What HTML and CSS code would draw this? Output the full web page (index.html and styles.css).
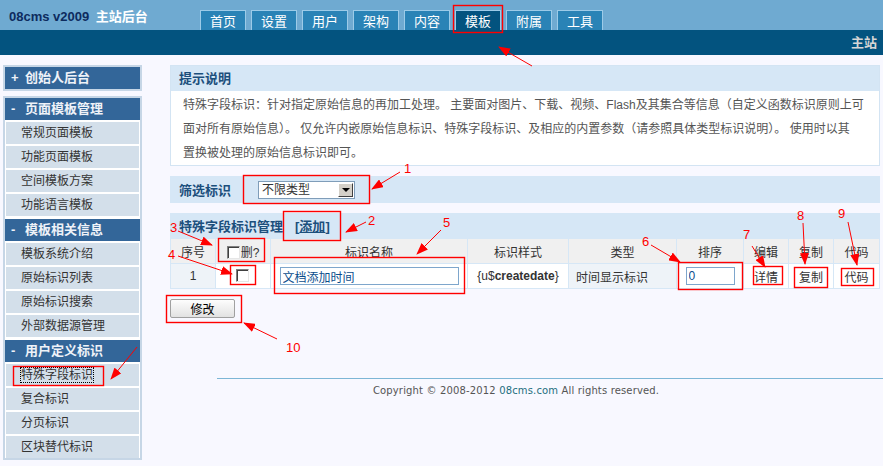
FILE: index.html
```html
<!DOCTYPE html>
<html lang="zh-cn">
<head>
  <meta charset="UTF-8" />
  <title>08cms v2009 主站后台</title>
  <link rel="stylesheet" href="styles.css">
</head>
<body>

  <div class="topbar">
    <div class="logo">08cms v2009 <span>主站后台</span></div>
    <div class="tabs">
      <a class="tab">首页</a>
      <a class="tab">设置</a>
      <a class="tab">用户</a>
      <a class="tab">架构</a>
      <a class="tab">内容</a>
      <a class="tab on">模板</a>
      <a class="tab">附属</a>
      <a class="tab">工具</a>
    </div>
  </div>
  <div class="subbar">主站</div>

  <div class="layout">
    <div class="sidebar">
      <div class="menu">
        <h3><i>+</i>创始人后台</h3>
      </div>
      <div class="menu">
        <h3><i>-</i>页面模板管理</h3>
        <ul>
          <li>常规页面模板</li>
          <li>功能页面模板</li>
          <li>空间模板方案</li>
          <li>功能语言模板</li>
        </ul>
        <h3><i>-</i>模板相关信息</h3>
        <ul>
          <li>模板系统介绍</li>
          <li>原始标识列表</li>
          <li>原始标识搜索</li>
          <li>外部数据源管理</li>
        </ul>
        <h3><i>-</i>用户定义标识</h3>
        <ul>
          <li><span class="current">特殊字段标识</span></li>
          <li>复合标识</li>
          <li>分页标识</li>
          <li>区块替代标识</li>
        </ul>
      </div>
    </div>

    <div class="main">
      <div class="tip">
        <h4>提示说明</h4>
        <p>特殊字段标识：针对指定原始信息的再加工处理。 主要面对图片、下载、视频、Flash及其集合等信息（自定义函数标识原则上可<br>面对所有原始信息）。 仅允许内嵌原始信息标识、特殊字段标识、及相应的内置参数（请参照具体类型标识说明）。 使用时以其<br>置换被处理的原始信息标识即可。</p>
      </div>

      <div class="filter">
        <b>筛选标识</b>
        <div class="select">
          <span class="select-text">不限类型</span>
          <span class="select-btn"></span>
        </div>
      </div>

      <div class="list-head">
        <b>特殊字段标识管理</b>
        <b class="add">[<a>添加</a>]</b>
      </div>

      <table class="grid">
        <colgroup>
          <col style="width:45px"><col style="width:55px"><col style="width:197px">
          <col style="width:101px"><col style="width:108px"><col style="width:67px">
          <col style="width:45px"><col style="width:45px"><col style="width:46px">
        </colgroup>
        <tr>
          <th>序号</th>
          <th><input type="checkbox" class="chk">删?</th>
          <th>标识名称</th>
          <th>标识样式</th>
          <th>类型</th>
          <th>排序</th>
          <th>编辑</th>
          <th>复制</th>
          <th>代码</th>
        </tr>
        <tr>
          <td class="alt">1</td>
          <td><input type="checkbox" class="chk"></td>
          <td><input type="text" class="txt name" value="文档添加时间"></td>
          <td class="tag">{u$<b>createdate</b>}</td>
          <td class="alt left">时间显示标识</td>
          <td><input type="text" class="txt order" value="0"></td>
          <td><a>详情</a></td>
          <td><a>复制</a></td>
          <td><a>代码</a></td>
        </tr>
      </table>

      <button class="btn">修改</button>

      <div class="footer">Copyright © 2008-2012 <a>08cms.com</a> All rights reserved.</div>
    </div>
  </div>

  <!-- 说明标注：红框、箭头和编号 -->
  <svg class="notes" width="883" height="466" viewBox="0 0 883 466">
    <defs>
      <marker id="head" markerWidth="12" markerHeight="9" refX="11" refY="4.5" orient="auto" markerUnits="userSpaceOnUse">
        <path d="M0,0 L12,4.5 L0,9 z" fill="#f00"/>
      </marker>
    </defs>
    <g fill="none" stroke="#f00" stroke-width="1.4">
      <rect x="453.5" y="5.5" width="49" height="27"/>
      <rect x="13.5" y="366.5" width="90" height="19"/>
      <rect x="243.5" y="175.5" width="126" height="28"/>
      <rect x="283.5" y="211.5" width="57" height="29"/>
      <rect x="218.5" y="238.5" width="46" height="23"/>
      <rect x="230.5" y="265.5" width="25" height="19"/>
      <rect x="274.5" y="257.5" width="190" height="36"/>
      <rect x="678.5" y="262.5" width="64" height="27"/>
      <rect x="753.5" y="266.5" width="29" height="18"/>
      <rect x="794.5" y="267.5" width="33" height="20"/>
      <rect x="841.5" y="268.5" width="32" height="17"/>
      <rect x="166.5" y="295.5" width="75" height="27"/>
    </g>
    <g stroke="#f00" stroke-width="1" marker-end="url(#head)">
      <line x1="532" y1="66" x2="499" y2="47"/>
      <line x1="137" y1="347" x2="111" y2="379"/>
      <line x1="400" y1="172" x2="372" y2="189"/>
      <line x1="366" y1="222" x2="346" y2="232"/>
      <line x1="178" y1="231" x2="212" y2="245"/>
      <line x1="178" y1="256" x2="232" y2="274"/>
      <line x1="441" y1="230" x2="417" y2="254"/>
      <line x1="651" y1="245" x2="680" y2="262"/>
      <line x1="752" y1="246" x2="765" y2="267"/>
      <line x1="803" y1="223" x2="805" y2="264"/>
      <line x1="848" y1="222" x2="857" y2="265"/>
      <line x1="277" y1="339" x2="244" y2="323"/>
    </g>
    <g class="num" fill="#f00">
      <text x="404" y="173">1</text>
      <text x="368" y="225">2</text>
      <text x="170" y="232">3</text>
      <text x="168" y="259">4</text>
      <text x="443" y="227">5</text>
      <text x="642" y="246">6</text>
      <text x="743" y="239">7</text>
      <text x="797" y="220">8</text>
      <text x="838" y="218">9</text>
      <text x="286" y="352">10</text>
    </g>
  </svg>

</body>
</html>
```

FILE: styles.css
```css
body {
  margin: 0;
  background-color: #f8f8ff;
  font-family: "Liberation Sans", "Noto Sans CJK SC", sans-serif;
  font-size: 12px;
  color: #333;
  position: relative;
}

a {
  cursor: pointer;
}

/* 顶部 */
.topbar {
  height: 30px;
  background-color: #6faad1;
  display: flex;
  align-items: flex-end;
}

.logo {
  width: 191px;
  padding-left: 9px;
  align-self: center;
  font-size: 13px;
  font-weight: bold;
  color: #0d2b5e;
  white-space: nowrap;
}

.logo span {
  color: #fff;
  margin-left: 3px;
}

.tabs {
  display: flex;
  gap: 5px;
}

.tab {
  width: 46px;
  height: 20px;
  box-sizing: border-box;
  border: 1px solid #9ccbe8;
  border-bottom: none;
  background-color: #2a83b6;
  color: #fff;
  font-size: 13px;
  line-height: 16px;
  padding-top: 3px;
  text-align: center;
}

.tab.on {
  background-color: #03537f;
}

.subbar {
  height: 25px;
  line-height: 25px;
  background-color: #03537f;
  color: #d6d6d6;
  font-size: 13px;
  font-weight: bold;
  text-align: right;
  padding-right: 6px;
}

/* 左侧菜单 */
.layout {
  display: flex;
  align-items: flex-start;
}

.sidebar {
  width: 140px;
  margin: 10px 0 0 3px;
}

.menu {
  border: 2px solid #c6d6e6;
  background-color: #fff;
  margin-bottom: 5px;
}

.menu h3 {
  margin: 0;
  height: 22px;
  line-height: 22px;
  background-color: #336699;
  color: #eef2f8;
  font-size: 13px;
  padding-left: 6px;
}

.menu h3 i {
  display: inline-block;
  width: 14px;
  font-style: normal;
}

.menu ul {
  list-style: none;
  margin: 0;
  padding: 0;
}

.menu ul + h3 {
  margin-top: 3px;
}

.menu li {
  height: 22px;
  line-height: 22px;
  margin: 2px 1px 0;
  padding-left: 15px;
  background-color: #d3dfea;
  font-size: 12px;
  color: #333;
}

.current {
  outline: 1px dotted #000;
}

/* 右侧内容 */
.main {
  flex: 1;
  margin: 10px 3px 0 28px;
}

.tip {
  border: 1px solid #d3e4f3;
  background-color: #fff;
}

.tip h4 {
  margin: 0;
  height: 25px;
  line-height: 25px;
  background-color: #d6e7f6;
  color: #1c4f7c;
  font-size: 13px;
  padding-left: 8px;
}

.tip p {
  margin: 0;
  padding: 2px 8px 0 12px;
  line-height: 24px;
  color: #555;
  white-space: nowrap;
}

.filter {
  margin-top: 10px;
  height: 27px;
  background-color: #d6e7f6;
  display: flex;
  align-items: center;
  padding-left: 9px;
}

.filter b {
  width: 79px;
  color: #1c4f7c;
  font-size: 13px;
}

.select {
  width: 97px;
  height: 18px;
  box-sizing: border-box;
  border: 1px solid #7f9db9;
  background-color: #fff;
  display: flex;
  justify-content: space-between;
  padding: 0 1px 0 3px;
  align-items: center;
}

.select-text {
  line-height: 16px;
}

.select-btn {
  width: 15px;
  height: 14px;
  box-sizing: border-box;
  background-color: #d4d0c8;
  border: 1px solid;
  border-color: #fff #404040 #404040 #fff;
  display: flex;
  align-items: center;
  justify-content: center;
}

.select-btn::after {
  content: "";
  border-left: 4px solid transparent;
  border-right: 4px solid transparent;
  border-top: 4px solid #000;
}

.list-head {
  margin-top: 10px;
  height: 25px;
  background-color: #d6e7f6;
  display: flex;
  align-items: center;
  padding-left: 9px;
  color: #1c4f7c;
  font-size: 13px;
}

.list-head .add {
  margin-left: 12px;
}

.add a {
  text-decoration: underline;
}

.grid {
  width: 100%;
  table-layout: fixed;
  border-collapse: collapse;
}

.grid th,
.grid td {
  height: 24px;
  padding: 0;
  border: 1px solid #d6e7f6;
  text-align: center;
  font-weight: normal;
  background-color: #fff;
}

.grid th {
  background-color: #f0f0f0;
}

.grid td.alt {
  background-color: #eef3f8;
}

.grid td.left {
  text-align: left;
  padding-left: 7px;
}

.grid .tag {
  font-size: 12px;
}

.chk {
  -webkit-appearance: none;
  appearance: none;
  width: 13px;
  height: 13px;
  margin: 0 1px 0 0;
  box-sizing: border-box;
  border: 1px solid;
  border-color: #808080 #e6e6e6 #e6e6e6 #808080;
  box-shadow: inset 1px 1px 0 #404040;
  background-color: #fff;
  vertical-align: -2px;
}

.txt {
  height: 18px;
  box-sizing: border-box;
  border: 1px solid #7ea6cc;
  padding: 0 2px;
  color: #0b4d8c;
  font-family: "Liberation Sans", "Noto Sans CJK SC", sans-serif;
  font-size: 12px;
  vertical-align: middle;
}

.txt.name {
  width: 179px;
}

.txt.order {
  width: 49px;
}

.btn {
  margin-top: 10px;
  width: 65px;
  height: 19px;
  border: 1px solid #a0a0a0;
  border-radius: 2px;
  background: linear-gradient(#fdfdfd, #e2e2e2);
  font-family: "Liberation Sans", "Noto Sans CJK SC", sans-serif;
  font-size: 12px;
  font-weight: normal;
  color: #000;
  padding: 0;
  display: block;
}

.footer {
  margin: 60px -3px 0 47px;
  border-top: 1px solid #7db6d6;
  padding: 5px 68px 0 0;
  line-height: 14px;
  text-align: center;
  font-family: "DejaVu Sans", sans-serif;
  font-size: 10px;
  letter-spacing: 0.15px;
  color: #555;
}

.footer a {
  color: #1d6e7e;
}

/* 标注层 */
.notes {
  position: absolute;
  left: 0;
  top: 0;
  pointer-events: none;
}

.num text {
  font-family: "Liberation Sans", sans-serif;
  font-size: 13px;
}
```
